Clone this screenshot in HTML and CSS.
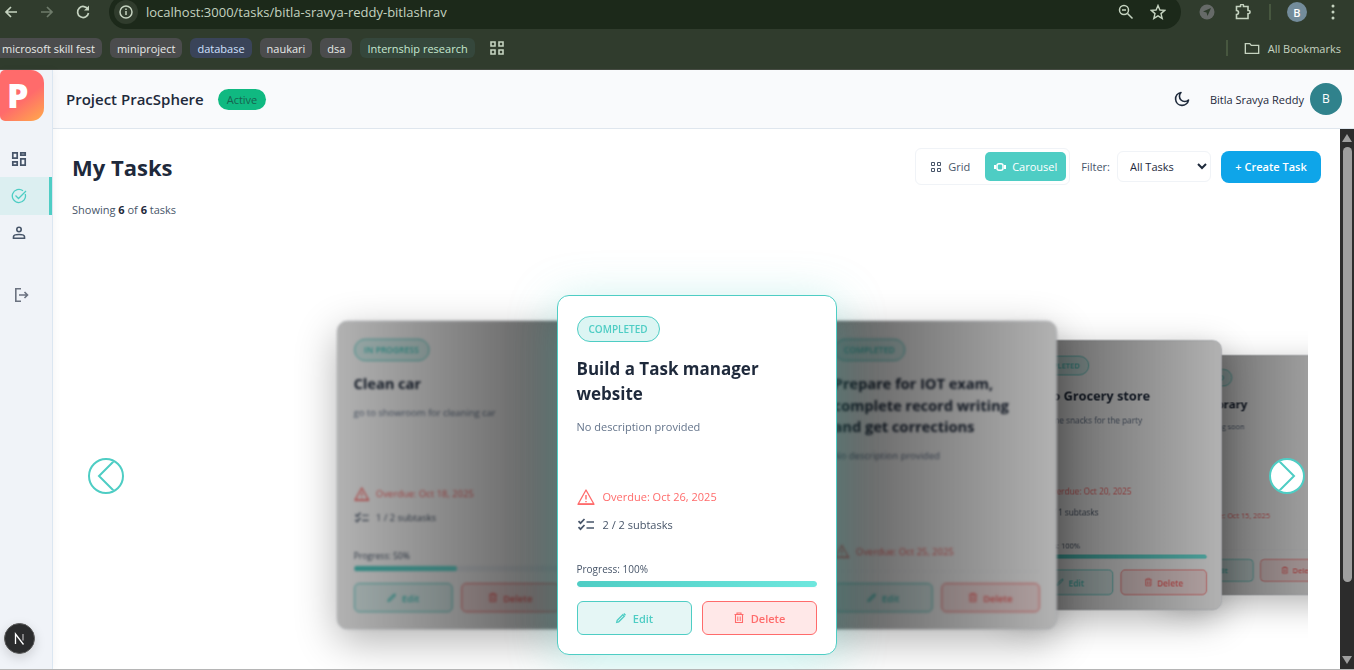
FILE: index.html
```html
<!DOCTYPE html>
<html lang="en">
<head>
<meta charset="utf-8">
<title>My Tasks - Project PracSphere</title>
<link rel="stylesheet" href="styles.css">
</head>
<body>
<svg class="sprite" aria-hidden="true">
  <symbol id="warn" viewBox="0 0 18 18"><path d="M9 2L17 16.3H1z" fill="none" stroke="currentColor" stroke-width="1.3" stroke-linejoin="round"/><path d="M1 15.9h16" stroke="currentColor" stroke-width="1.4"/><path d="M9 7v4.6M9 13v1.2" stroke="currentColor" stroke-width="1.4"/></symbol>
  <symbol id="checks" viewBox="0 0 18 18"><path d="M1.5 5.2l2 2L7.5 3M1.5 11.2l2 2L7.5 9" fill="none" stroke="currentColor" stroke-width="1.7"/><path d="M9.5 6h7.5M9.5 12h7.5" stroke="currentColor" stroke-width="1.3"/></symbol>
  <symbol id="pencil" viewBox="0 0 12 12"><path d="M1.7 10.3l.5-2L7.8 2.700 9.300 4.200 3.700 9.800z" fill="none" stroke="currentColor" stroke-width="1.300"/><path d="M8.300 2l1-1 1.700 1.700-1 1z" fill="currentColor"/></symbol>
  <symbol id="trash" viewBox="0 0 12 12"><path d="M1.500 2.500h9M4 2V1h4v1M2.500 3v7.500h7V3" fill="none" stroke="currentColor" stroke-width="1.100"/><path d="M4.800 4.500v4.500M7.200 4.500v4.500" stroke="currentColor"/></symbol>
</svg>

<div class="browser">
  <div class="toolbar">
    <button class="tool" aria-label="Back"><svg viewBox="0 0 16 16"><path d="M14 8H3M8 3L3 8l5 5" fill="none" stroke="currentColor" stroke-width="1.700"/></svg></button>
    <button class="tool dim" aria-label="Forward"><svg viewBox="0 0 16 16"><path d="M2 8h11M8 3l5 5-5 5" fill="none" stroke="currentColor" stroke-width="1.700"/></svg></button>
    <button class="tool" aria-label="Reload"><svg viewBox="0 0 16 16"><path d="M13 5.500A5.500 5.500 0 1 0 13.500 9" fill="none" stroke="currentColor" stroke-width="1.700"/><path d="M14 1.500V6.500H9z" fill="currentColor"/></svg></button>
    <div class="address">
      <span class="info"><svg viewBox="0 0 16 16"><circle cx="8" cy="8" r="6" fill="none" stroke="currentColor" stroke-width="1.500"/><path d="M8 7v4M8 4.500v1.500" stroke="currentColor" stroke-width="1.500"/></svg></span>
      <input class="url" type="text" aria-label="Address" value="localhost:3000/tasks/bitla-sravya-reddy-bitlashrav">
      <button class="tool" aria-label="Zoom out"><svg viewBox="0 0 16 16"><circle cx="6" cy="6" r="4.500" fill="none" stroke="currentColor" stroke-width="1.500"/><path d="M4 6h4M9.500 9.500l5 5" stroke="currentColor" stroke-width="1.500"/></svg></button>
      <button class="tool" aria-label="Bookmark"><svg viewBox="0 0 16 16"><path d="M8 1.500l1.900 4.500 4.800.4-3.700 3.200 1.200 4.800L8 11.800l-4.200 2.600L5 9.600 1.300 6.400l4.800-.4z" fill="none" stroke="currentColor" stroke-width="1.400"/></svg></button>
    </div>
    <button class="tool" aria-label="Extension"><svg viewBox="0 0 16 16"><circle cx="8" cy="8" r="7.500" fill="#666a68"/><path d="M12 4L4 7.500l3.500 1L8.500 12z" fill="#2d3b2b"/></svg></button>
    <button class="tool" aria-label="Extensions"><svg viewBox="0 0 16 16"><path d="M1.500 2.500h4V1.800a1.500 1.500 0 0 1 3 0v.7h4.500v4h.5a1.600 1.600 0 0 1 0 3.200H13v4.800H1.500v-4a2 2 0 0 0 0-4z" fill="none" stroke="currentColor" stroke-width="1.600"/></svg></button>
    <span class="bar"></span>
    <button class="profile">B</button>
    <button class="tool" aria-label="Menu"><svg viewBox="0 0 16 16"><circle cx="8" cy="2" r="1.500" fill="currentColor"/><circle cx="8" cy="8" r="1.500" fill="currentColor"/><circle cx="8" cy="14" r="1.500" fill="currentColor"/></svg></button>
  </div>
  <div class="bookmarks">
    <button class="mark first">microsoft skill fest</button>
    <button class="mark">miniproject</button>
    <button class="mark blue">database</button>
    <button class="mark">naukari</button>
    <button class="mark">dsa</button>
    <button class="mark green">Internship research</button>
    <button class="tool apps" aria-label="Tab groups"><svg viewBox="0 0 16 16"><path d="M2 2h4v4H2zM10 2h4v4h-4zM2 10h4v4H2zM10 10h4v4h-4z" fill="none" stroke="currentColor" stroke-width="1.600"/></svg></button>
    <span class="divider"></span>
    <button class="all"><svg viewBox="0 0 18 14"><path d="M1.500 12.500v-11h5l1.700 2h8.300v9z" fill="none" stroke="currentColor" stroke-width="1.500"/></svg>All Bookmarks</button>
  </div>
</div>

<div class="app">
  <nav class="sidebar">
    <div class="logo">P</div>
    <a class="nav" href="#" aria-label="Dashboard"><svg viewBox="0 0 16 16"><path d="M1.800 1.800h4.400v5.400H1.800zM9.800 1.800h4.400v2.400H9.800zM9.800 7.800h4.400v6.400H9.800zM1.800 10.800h4.400v3.400H1.800z" fill="none" stroke="currentColor" stroke-width="1.700"/></svg></a>
    <a class="nav current" href="#" aria-label="Tasks"><svg viewBox="0 0 16 16"><path d="M14.200 6A6.600 6.600 0 1 1 12 2.800" fill="none" stroke="currentColor" stroke-width="1.300"/><path d="M4.500 7.500l3 3L15 3" fill="none" stroke="currentColor" stroke-width="1.300"/></svg></a>
    <a class="nav" href="#" aria-label="Profile"><svg viewBox="0 0 16 16"><circle cx="8" cy="4.500" r="2.200" fill="none" stroke="currentColor" stroke-width="1.600"/><path d="M2.500 13.200v-1.500c0-1.200 2.500-2.200 5.500-2.200s5.500 1 5.500 2.200v1.500z" fill="none" stroke="currentColor" stroke-width="1.600"/></svg></a>
    <a class="nav exit" href="#" aria-label="Log out"><svg viewBox="0 0 16 16"><path d="M8 1.800H2.800v12.400H8M6 8h8M11.500 5l3 3-3 3" fill="none" stroke="currentColor" stroke-width="1.600"/></svg></a>
    <button class="dev" aria-label="Next.js"><svg viewBox="0 0 16 16"><path d="M4.500 13V3l8 10.500" fill="none" stroke="#fff" stroke-width="1.300"/><path d="M12 3v6.500" stroke="#bbb" stroke-width="1.200"/></svg></button>
  </nav>

  <div class="main">
    <header class="top">
      <strong class="brand">Project PracSphere</strong>
      <span class="status">Active</span>
      <button class="moon" aria-label="Dark mode"><svg viewBox="0 0 16 16"><path d="M7 1.500A6.500 6.500 0 1 0 14.500 9 5 5 0 0 1 7 1.500z" fill="none" stroke="currentColor" stroke-width="1.600" stroke-linejoin="round"/></svg></button>
      <span class="user">Bitla Sravya Reddy</span>
      <span class="avatar">B</span>
    </header>
    <div class="scroll">
      <main class="page">
        <div class="head">
          <h1>My Tasks</h1>
          <div class="views">
            <button><svg viewBox="0 0 12 12"><path d="M1.500 1.500h3v3h-3zM7.500 1.500h3v3h-3zM1.500 7.500h3v3h-3zM7.500 7.500h3v3h-3z" fill="none" stroke="currentColor"/></svg>Grid</button>
            <button class="on"><svg viewBox="0 0 12 12"><rect x="3" y="2.700" width="6" height="6.600" rx="2" fill="none" stroke="currentColor" stroke-width="1.500"/><path d="M0 4h2v4H0zM10 4h2v4h-2z" fill="currentColor"/></svg>Carousel</button>
          </div>
          <label class="filter" for="filter">Filter:</label>
          <div class="select"><select id="filter"><option>All Tasks</option></select><svg viewBox="0 0 10 10"><path d="M1 3l4 4 4-4" fill="none" stroke="currentColor" stroke-width="2"/></svg></div>
          <button class="create">+ Create Task</button>
        </div>
        <p class="count">Showing <b>6</b> of <b>6</b> tasks</p>

        <section class="carousel">
          <div class="track">
            <article class="card before">
              <span class="badge">IN PROGRESS</span>
              <h2>Clean car</h2>
              <p>go to showroom for cleaning car</p>
              <ul class="meta">
                <li class="late"><svg><use href="#warn"/></svg>Overdue: Oct 18, 2025</li>
                <li><svg><use href="#checks"/></svg>1 / 2 subtasks</li>
              </ul>
              <div class="progress"><span>Progress: 50%</span><div class="rail"><div class="fill" style="width:50%"></div></div></div>
              <div class="actions"><button class="edit"><svg><use href="#pencil"/></svg>Edit</button><button class="delete"><svg><use href="#trash"/></svg>Delete</button></div>
            </article>
            <article class="card active">
              <span class="badge">COMPLETED</span>
              <h2>Build a Task manager website</h2>
              <p>No description provided</p>
              <ul class="meta">
                <li class="late"><svg><use href="#warn"/></svg>Overdue: Oct 26, 2025</li>
                <li><svg><use href="#checks"/></svg>2 / 2 subtasks</li>
              </ul>
              <div class="progress"><span>Progress: 100%</span><div class="rail"><div class="fill" style="width:100%"></div></div></div>
              <div class="actions"><button class="edit"><svg><use href="#pencil"/></svg>Edit</button><button class="delete"><svg><use href="#trash"/></svg>Delete</button></div>
            </article>
            <article class="card after first-after">
              <span class="badge">COMPLETED</span>
              <h2>Prepare for IOT exam, complete record writing and get corrections</h2>
              <p>No description provided</p>
              <ul class="meta">
                <li class="late"><svg><use href="#warn"/></svg>Overdue: Oct 25, 2025</li>
              </ul>
              <div class="actions"><button class="edit"><svg><use href="#pencil"/></svg>Edit</button><button class="delete"><svg><use href="#trash"/></svg>Delete</button></div>
            </article>
            <article class="card after second-after">
              <span class="badge">COMPLETED</span>
              <h2>Go to Grocery store</h2>
              <p>buy some snacks for the party</p>
              <ul class="meta">
                <li class="late"><svg><use href="#warn"/></svg>Overdue: Oct 20, 2025</li>
                <li><svg><use href="#checks"/></svg>1 / 1 subtasks</li>
              </ul>
              <div class="progress"><span>Progress: 100%</span><div class="rail"><div class="fill" style="width:100%"></div></div></div>
              <div class="actions"><button class="edit"><svg><use href="#pencil"/></svg>Edit</button><button class="delete"><svg><use href="#trash"/></svg>Delete</button></div>
            </article>
            <article class="card after third-after">
              <span class="badge">COMPLETED</span>
              <h2>Go to library</h2>
              <p>exams coming soon</p>
              <ul class="meta">
                <li class="late"><svg><use href="#warn"/></svg>Overdue: Oct 15, 2025</li>
                <li><svg><use href="#checks"/></svg>0 / 1</li>
              </ul>
              <div class="actions"><button class="edit"><svg><use href="#pencil"/></svg>Edit</button><button class="delete"><svg><use href="#trash"/></svg>Delete</button></div>
            </article>
          </div>
          <button class="arrow left" aria-label="Previous"><svg viewBox="0 0 32 32"><path d="M24 1L9 16l15 15" fill="none" stroke="currentColor" stroke-width="2"/></svg></button>
          <button class="arrow right" aria-label="Next"><svg viewBox="0 0 32 32"><path d="M8 1l15 15L8 31" fill="none" stroke="currentColor" stroke-width="2"/></svg></button>
        </section>
      </main>
      <div class="scrollbar"><i class="up"></i><div class="thumb"></div><i class="down"></i></div>
    </div>
  </div>
</div>
</body>
</html>
```

FILE: styles.css
```css
* { box-sizing: border-box; }
body {
  margin: 0;
  height: 100vh;
  display: flex;
  flex-direction: column;
  overflow: hidden;
  border-bottom: 1px solid #b5b5b5;
  font-family: "Open Sans", "Noto Sans", sans-serif;
  font-size: 11px;
  color: #1e293b;
  background: #fff;
}
button, input, select { font: inherit; color: inherit; border: 0; padding: 0; margin: 0; background: none; }
svg { display: block; flex: none; }
.sprite { width: 0; height: 0; position: absolute; }

/* Browser frame */
.browser { background: #303c2d; color: #c5d3c0; border-bottom: 1px solid #454b42; flex: none; }
.toolbar { display: flex; align-items: center; height: 29px; padding: 0 13px 5px 3px; gap: 20px; }
.tool { width: 16px; height: 16px; flex: none; }
.tool svg { width: 16px; height: 16px; }
.dim { color: #6e7b6a; }
.address {
  flex: 1;
  display: flex;
  align-items: center;
  gap: 16px;
  height: 34px;
  padding: 0 15px 0 5px;
  margin: 0 -2px;
  border-radius: 17px;
  background: #1c291a;
}
.info { width: 24px; height: 24px; padding: 4px; border-radius: 12px; background: #303c2d; }
.info svg { width: 16px; height: 16px; }
.url { flex: 1; min-width: 0; margin-left: -8px; font-size: 13px; outline: 0; }
.bar { width: 2px; height: 16px; margin: 0 -4px 0 -2px; background: #47573f; }
.divider { width: 2px; height: 16px; background: #47573f; }
.profile { width: 20px; height: 20px; margin-right: -2px; border-radius: 10px; background: #738c9b; color: #fff; font-size: 11px; font-weight: 600; }
.bookmarks { display: flex; align-items: center; height: 40px; padding: 0 13px 2px 0; gap: 8px; }
.mark { height: 20px; padding: 0 7px; border-radius: 6px; background: #4b4c4d; color: #e8eae8; font-size: 11px; }
.first { padding-left: 2px; border-radius: 0 6px 6px 0; }
.blue { background: #3a4459; color: #cfe0ff; }
.green { background: #35473c; color: #c5e8d0; }
.apps { margin: 0 auto 0 6px; }
.all { display: flex; align-items: center; gap: 8px; padding-left: 8px; font-size: 11px; }
.all svg { width: 16px; height: 13px; }

/* Shell */
.app { flex: 1; min-height: 0; display: flex; }
.sidebar { width: 53px; flex: none; display: flex; flex-direction: column; background: #f0f3f8; border-right: 1px solid #dbe6f1; box-shadow: 2px 0 8px rgba(0, 0, 0, .04); z-index: 1; }
.logo { width: 44px; height: 51px; margin-bottom: 20px; border-radius: 5px 13px 13px 5px; background: linear-gradient(145deg, #ff6b6b 55%, #ffab4a); color: #fff; font-size: 34px; font-weight: 800; line-height: 50px; padding-left: 7px; }
.nav { display: flex; align-items: center; height: 36px; padding-left: 11px; color: #475569; }
.nav svg { width: 16px; height: 16px; }
.current { height: 38px; background: #dceff1; color: #4ecdc4; border-right: 3px solid #4ecdc4; }
.exit { margin-top: 26px; padding-left: 13px; color: #6b7280; }
.dev { margin: auto auto 15px 4px; width: 31px; height: 31px; padding: 6px; border-radius: 50%; border: 1px solid #5c5c5c; background: #2b2c2d; box-shadow: 0 4px 12px rgba(0, 0, 0, .15); }
.dev svg { width: 16px; height: 16px; }
.main { flex: 1; min-width: 0; display: flex; flex-direction: column; }
.top { height: 59px; flex: none; display: flex; align-items: center; padding: 0 12px 0 13px; background: #f9fafc; border-bottom: 1px solid #dfe6ee; }
.brand { font-size: 15px; font-weight: 600; }
.status { margin-left: 14px; padding: 0 9px; line-height: 21px; border-radius: 11px; background: #10b981; color: #176350; font-size: 11px; }
.moon { margin: 0 20px 0 auto; }
.moon svg { width: 16px; height: 16px; }
.user { margin-right: 6px; font-size: 11px; }
.avatar { width: 32px; height: 32px; border-radius: 50%; background: #30828c; color: #fff; font-size: 12px; line-height: 32px; text-align: center; }

/* Page */
.scroll { flex: 1; min-height: 0; display: flex; }
.page { flex: 1; min-width: 0; padding: 19px 19px 0; overflow: hidden; }
.head { display: flex; align-items: center; height: 37px; }
h1 { margin: 0 auto 0 0; font-size: 22px; line-height: 36px; font-weight: 700; }
.views { display: flex; height: 37px; padding: 3px; border: 1px solid #f0f3f7; border-radius: 6px; color: #475569; }
.views button { display: flex; align-items: center; gap: 6px; padding: 0 9px; border-radius: 5px; }
.views button svg { width: 12px; height: 12px; }
.views button:first-child { padding: 0 15px 0 11px; }
.views .on { background: #4ecdc4; color: #fff; }
.filter { margin: 0 7px 0 11px; color: #475569; }
.select { position: relative; }
.select select { width: 94px; height: 31px; padding: 0 12px; border: 1px solid #f0f3f7; border-radius: 6px; background: #fff; appearance: none; }
.select svg { position: absolute; right: 4px; top: 10px; width: 10px; height: 10px; pointer-events: none; }
.create { margin-left: 10px; width: 100px; height: 32px; border-radius: 8px; background: #0ea5e9; color: #fff; font-weight: 600; }
.count { margin: 17px 0 0; line-height: 16px; color: #475569; }
.count b { color: #1e293b; }

/* Coverflow */
.carousel { position: relative; margin: 27px 13px 0; height: 460px; overflow: hidden; }
.track { display: flex; align-items: center; width: 1400px; height: 460px; position: absolute; left: 50%; margin-left: -420px; perspective: 1200px; perspective-origin: 420px 50%; }
.card {
  position: relative;
  flex: none;
  display: flex;
  flex-direction: column;
  width: 280px;
  height: 360px;
  padding: 20px 19px 19px;
  border: 1px solid #e6eaef;
  border-radius: 12px;
  background: #fff;
  box-shadow: 0 14px 48px rgba(0, 0, 0, .3);
}
.before, .after { filter: blur(1px) brightness(.7); }
.before, .first-after { z-index: 3; transform: translateZ(-200px); }
.second-after { z-index: 2; transform: translateZ(-400px); }
.third-after { z-index: 1; transform: translateZ(-600px); }
.before::after, .after::after { content: ""; position: absolute; inset: -1px; border-radius: 12px; }
.before::after { background: linear-gradient(to right, rgba(0, 0, 0, 0), rgba(0, 0, 0, .5)); }
.after::after { background: linear-gradient(to left, rgba(0, 0, 0, 0), rgba(0, 0, 0, .5)); }
.active { z-index: 4; border-color: #4ecdc4; box-shadow: 0 8px 48px rgba(78, 205, 196, .35); }
.badge { align-self: flex-start; padding: 0 11px; line-height: 24px; border: 1px solid #4ecdc4; border-radius: 13px; background: #dcf5f3; color: #4ecdc4; font-size: 10px; font-weight: 600; }
.card h2 { margin: 14px 0 0; font-size: 17px; line-height: 25px; font-weight: 700; }
.card p { margin: 12px 0 0; line-height: 18px; color: #64748b; }
.meta { list-style: none; margin: auto 0 13px; padding: 0; display: grid; gap: 8px; }
.meta li { display: flex; align-items: center; gap: 8px; line-height: 20px; color: #475569; }
.meta svg { width: 18px; height: 18px; }
.meta .late { color: #ff6b6b; }
.progress { padding-top: 13px; color: #475569; font-size: 10px; line-height: 16px; }
.progress span { display: block; margin-bottom: 4px; }
.rail { height: 6px; border-radius: 3px; background: #f1f5f9; overflow: hidden; }
.fill { height: 6px; border-radius: 3px; background: linear-gradient(to right, #4ecdc4, #6ee7de); }
.actions { display: flex; gap: 10px; padding-top: 13px; border-top: 1px solid #f8fafc; }
.actions button { flex: 1; height: 34px; display: flex; align-items: center; justify-content: center; gap: 6px; border: 1px solid; border-radius: 6px; font-weight: 600; }
.actions svg { width: 12px; height: 12px; }
.edit { background: #e5f6f5; color: #4ecdc4; }
.delete { background: #ffe8e8; color: #ff6b6b; }
.arrow { z-index: 5; position: absolute; top: 213px; width: 36px; height: 36px; border: 2px solid #4ecdc4; border-radius: 50%; background: #fff; color: #4ecdc4; overflow: hidden; }
.arrow svg { width: 32px; height: 32px; }
.left { left: 3px; }
.right { right: 3px; }

/* Scrollbar */
.scrollbar { width: 14px; flex: none; display: flex; flex-direction: column; align-items: center; padding: 5px 0; background: #2c2c2c; }
.scrollbar i { border: 5px solid transparent; }
.scrollbar .up { border-top: 0; border-bottom: 8px solid #9f9f9f; }
.scrollbar .down { border-bottom: 0; border-top: 8px solid #9f9f9f; margin-top: auto; }
.thumb { width: 9px; height: 82%; margin-top: 5px; border-radius: 5px; background: #9f9f9f; }
```
